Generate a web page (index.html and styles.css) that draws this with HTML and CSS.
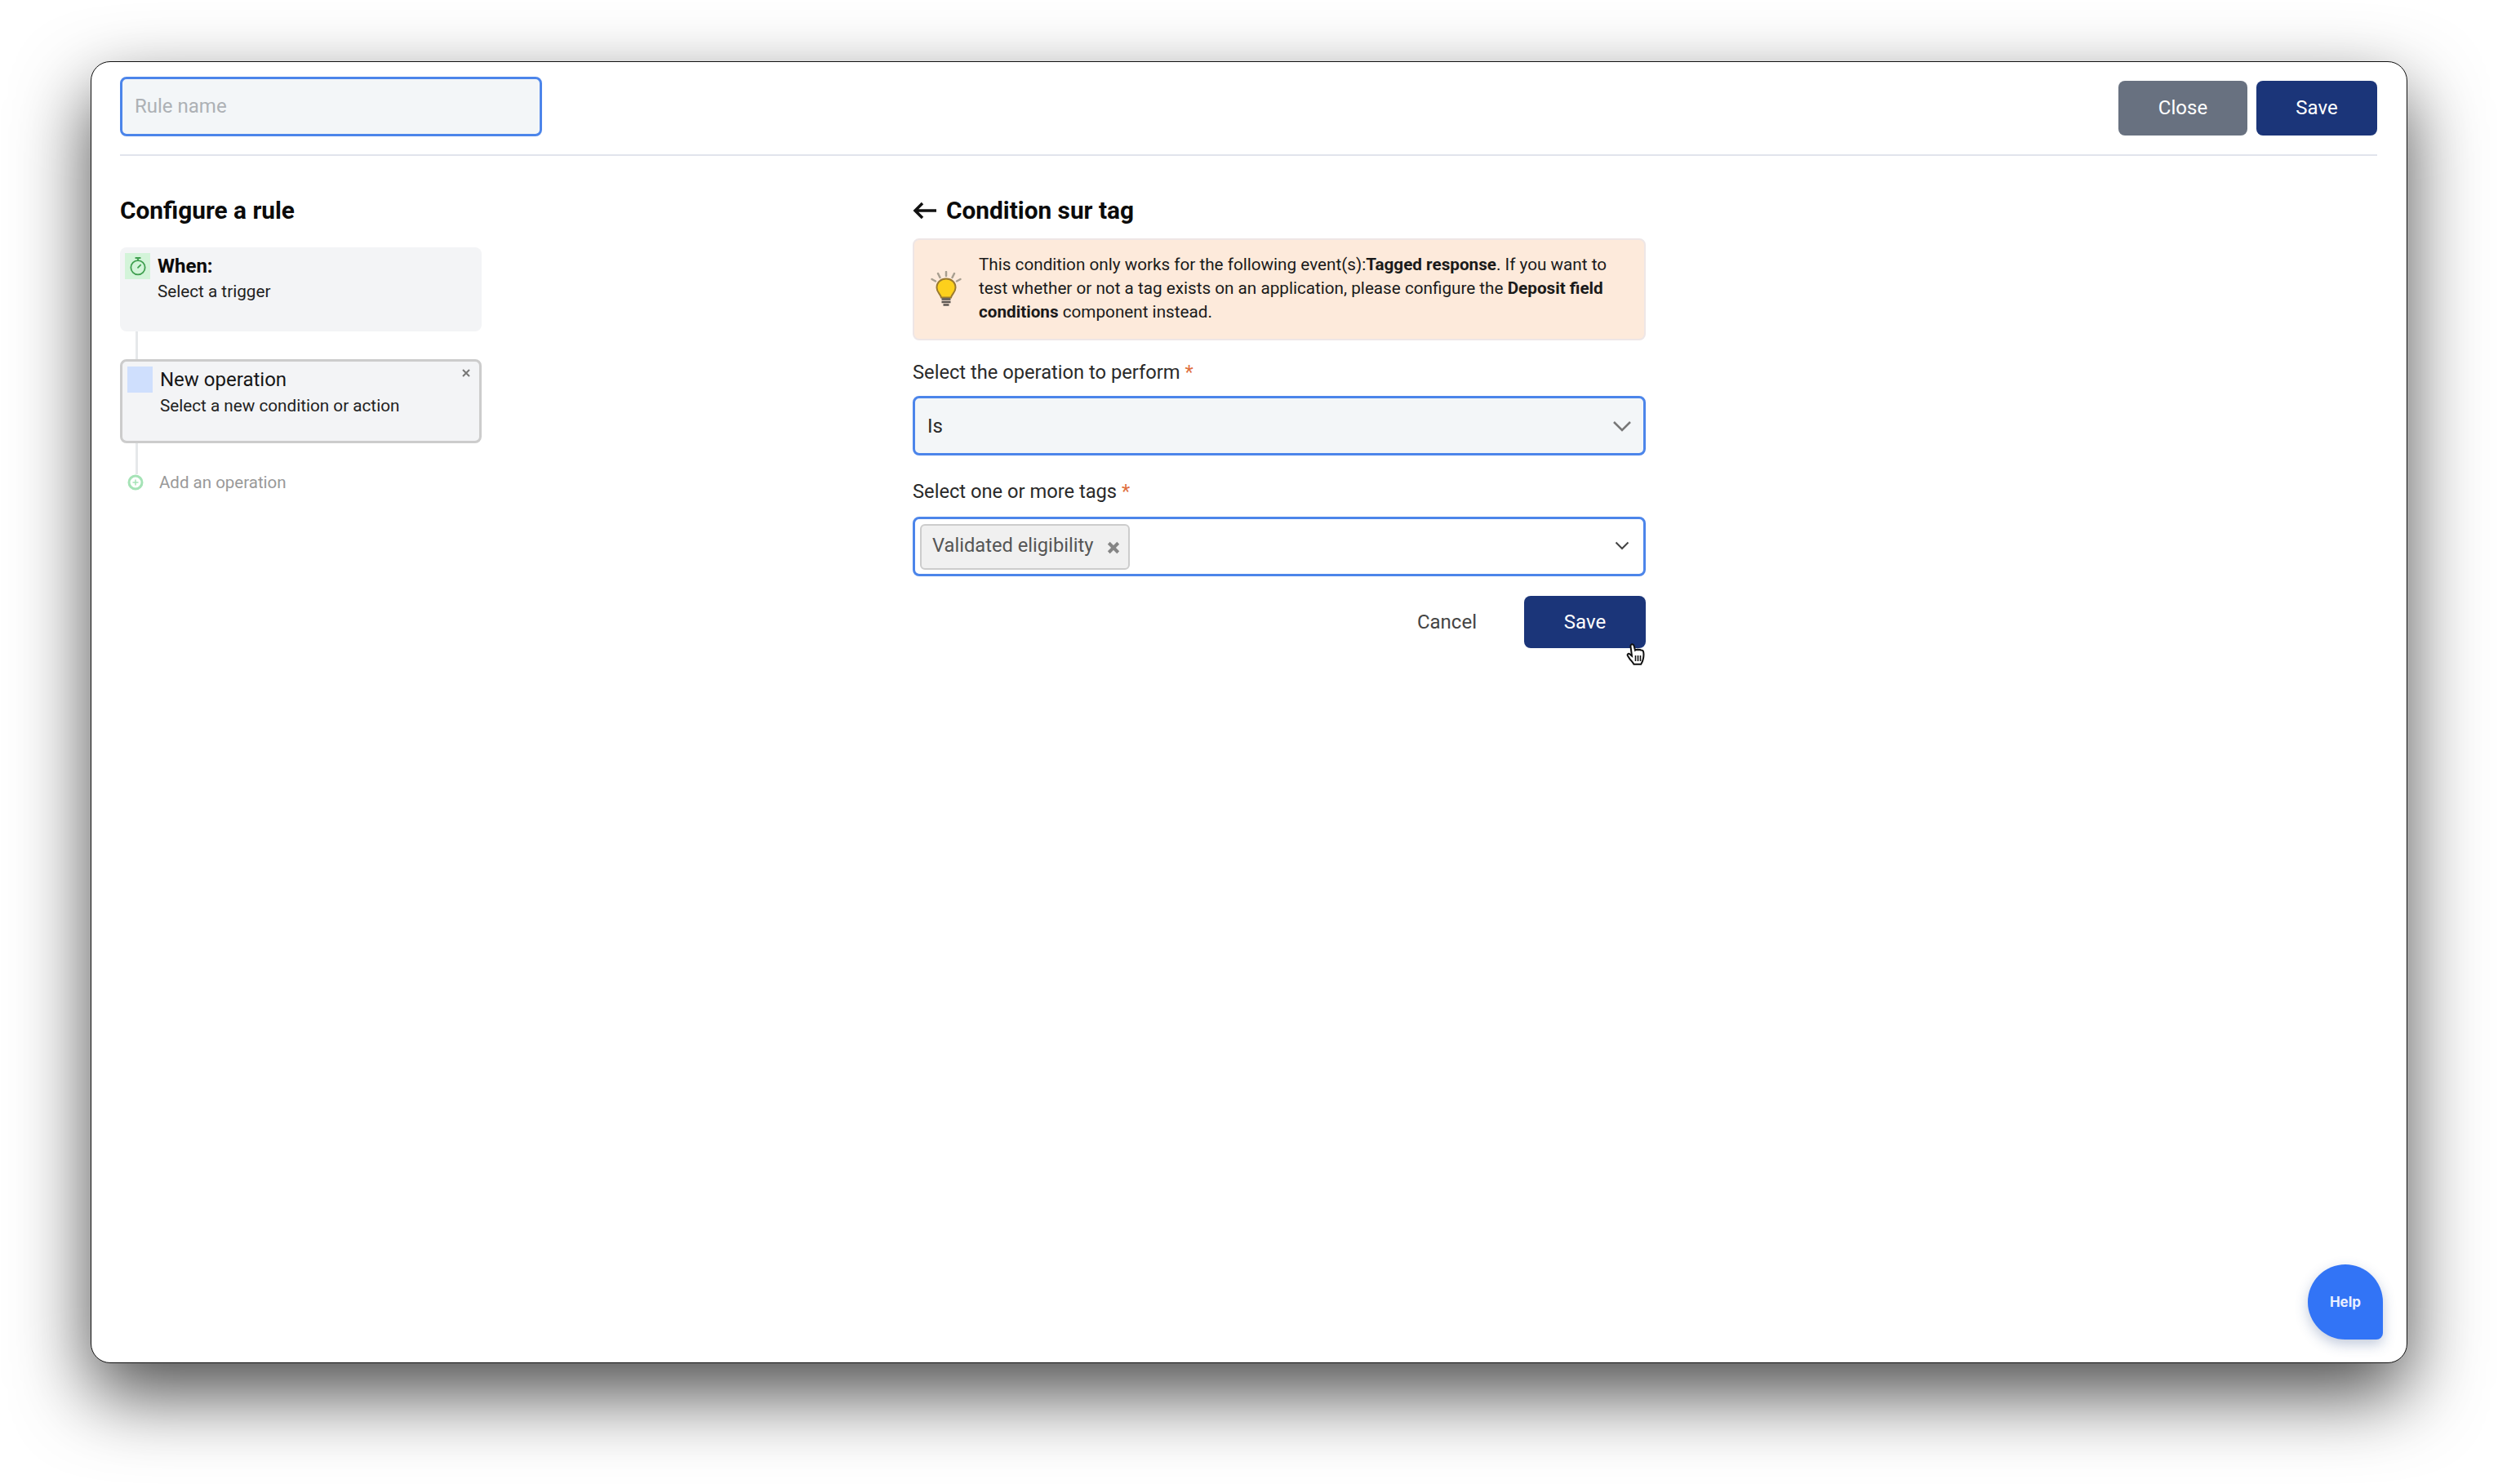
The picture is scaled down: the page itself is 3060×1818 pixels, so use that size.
FILE: index.html
```html
<!DOCTYPE html>
<html>
	<head>
		<title>Configure a rule</title>
		<link rel="stylesheet" href="styles.css">
	</head>
	<body>

		<div class="window">
			<div class="header">
				<div class="name-input">Rule name</div>
				<div class="header-actions">
					<button class="btn btn-grey">Close</button>
					<button class="btn btn-blue">Save</button>
				</div>
			</div>

			<div class="main">
				<div class="rule-col">
					<h2 class="heading">Configure a rule</h2>

					<div class="card">
						<div class="tile tile-green">
							<svg width="20" height="24" viewBox="0 0 22 26" fill="none" stroke="#3f9f4f" stroke-width="2" stroke-linecap="round">
								<circle cx="11" cy="15" r="9.5"/>
								<path d="M8 2h6M11 2v3.500M11 15l3.500-3.500"/>
							</svg>
						</div>
						<div>
							<div class="card-title bold">When:</div>
							<div class="card-sub">Select a trigger</div>
						</div>
					</div>

					<div class="connector"></div>

					<div class="card card-active">
						<div class="tile tile-blue"></div>
						<div>
							<div class="card-title">New operation</div>
							<div class="card-sub">Select a new condition or action</div>
						</div>
						<svg class="card-close" width="12" height="12" viewBox="0 0 12 12" stroke="#777" stroke-width="2">
							<path d="M2 2l8 8M10 2l-8 8"/>
						</svg>
					</div>

					<div class="connector connector-short"></div>

					<div class="add-row">
						<svg width="20" height="20" viewBox="0 0 20 20" fill="none" stroke="#a5e3b6" stroke-width="3">
							<circle cx="10" cy="10" r="8"/>
							<path d="M10 6.500v7M6.500 10h7" stroke-width="1.500"/>
						</svg>
						<span>Add an operation</span>
					</div>
				</div>

				<div class="form-col">
					<h2 class="heading heading-back">
						<svg width="30" height="22" viewBox="0 0 30 22" fill="none" stroke="#111" stroke-width="3.500">
							<path d="M29 11H3M12 2l-9 9 9 9"/>
						</svg>
						Condition sur tag
					</h2>

					<div class="alert">
						<svg class="bulb" width="38" height="44" viewBox="0 0 38 44" fill="none">
							<path d="M19 1v5M9 3l2.500 5M29 3l-2.500 5M1.500 10L6 12.500M36.500 10L32 12.500" stroke="#a89f90" stroke-width="2.500" stroke-linecap="round"/>
							<path d="M19 9.500c-6.500 0-11.500 4.500-11.500 11 0 5.500 4.500 7.500 5.500 12h12c1-4.500 5.500-6.500 5.500-12 0-6.500-5-11-11.500-11z" fill="#fdd01c" stroke="#9a7a30" stroke-width="2"/>
							<path d="M13.500 34.500h11M13.500 38h11M15.500 41.500h7" stroke="#5b5550" stroke-width="2.500"/>
						</svg>
						<p>This condition only works for the following event(s):<b>Tagged response</b>. If you want to test whether or not a tag exists on an application, please configure the <b>Deposit field conditions</b> component instead.</p>
					</div>

					<label class="field-label">Select the operation to perform <span class="req">*</span></label>
					<div class="select select-grey">
						<span class="select-value">Is</span>
						<svg width="24" height="14" viewBox="0 0 24 14" fill="none" stroke="#777" stroke-width="2.500">
							<path d="M2 2l10 10L22 2"/>
						</svg>
					</div>

					<label class="field-label field-label-next">Select one or more tags <span class="req">*</span></label>
					<div class="select select-tags">
						<div class="chip">
							<span>Validated eligibility</span>
							<svg width="16" height="16" viewBox="0 0 14 14" stroke="#858585" stroke-width="3.500">
								<path d="M2 2l10 10M12 2L2 12"/>
							</svg>
						</div>
						<svg class="chevron-small" width="18" height="11" viewBox="0 0 18 11" fill="none" stroke="#444" stroke-width="2">
							<path d="M1.500 1.500L9 9l7.500-7.500"/>
						</svg>
					</div>

					<div class="form-actions">
						<button class="btn-text">Cancel</button>
						<button class="btn btn-blue btn-form">Save</button>
						<svg class="cursor" width="24" height="27" viewBox="0 0 24 27">
							<path d="M6.500 1.500c1.300-.6 2.600.2 3 1.500l1.500 5.500c.5-.6 1.500-.8 2.300-.3.5-.5 1.600-.6 2.300 0 .7-.4 1.700-.3 2.300.3 1.500-.3 3 .6 3.300 2.300.5 3 .3 6-.5 9-.5 2.500-1.500 4.500-2.500 6H9.500c-1-2-3-4-5-6.500L2 15.500c-1-1.500.5-3.300 2-2.500l3 2.500L5.500 4c-.2-1 .2-2 1-2.500z" fill="#fff" stroke="#111" stroke-width="2"/>
							<path d="M11.500 15v7M14.500 15v7M17.500 15v7" stroke="#111" stroke-width="1.600"/>
						</svg>
					</div>
				</div>
			</div>

			<button class="help">Help</button>
		</div>

	</body>
</html>
```

FILE: styles.css
```css
* {
	box-sizing: border-box;
}
body {
	font-family: Roboto, Arial, sans-serif;
	width: 3060px;
	height: 1818px;
	padding: 75px 111px 0 111px;
	margin: 0;
	overflow: hidden;
	background-color: #fff;
	color: #111;
}

.window {
	position: relative;
	width: 2838px;
	height: 1595px;
	padding: 0 36px 0 35px;
	background-color: #fff;
	border: 1.5px solid #111;
	border-radius: 24px;
	box-shadow: 0 38px 92px rgba(0, 0, 0, .7);
}

.header {
	display: flex;
	justify-content: space-between;
	height: 115px;
	padding-top: 18px;
	border-bottom: 2px solid #e1e4ec;
}
.name-input {
	width: 517px;
	height: 73px;
	padding: 0 15px;
	font-size: 24px;
	line-height: 67px;
	color: #adb1b5;
	background-color: #f3f6f8;
	border: 3px solid #4c85ea;
	border-radius: 8px;
}
.header-actions {
	display: flex;
	gap: 11px;
	padding-top: 5px;
}

.btn {
	height: 67px;
	padding: 0 0 2px 0;
	border: 0;
	border-radius: 8px;
	font-family: inherit;
	font-size: 24px;
	color: #fff;
	cursor: pointer;
}
.btn-grey {
	width: 158px;
	background-color: #687180;
}
.btn-blue {
	width: 148px;
	background-color: #1b3579;
}

.main {
	display: flex;
	padding-top: 49px;
}
.rule-col {
	width: 971px;
}
.form-col {
	width: 898px;
}

.heading {
	margin: 0 0 27px 0;
	font-size: 29.800px;
	line-height: 36px;
	font-weight: 700;
	color: #0b0b0b;
}
.heading-back {
	display: flex;
	align-items: center;
	gap: 11px;
	margin-bottom: 16px;
}

.card {
	display: flex;
	align-items: flex-start;
	gap: 9px;
	width: 443px;
	height: 103px;
	padding: 7px 6px;
	background-color: #f3f4f6;
	border-radius: 8px;
}
.card-active {
	position: relative;
	height: 103px;
	padding: 6px;
	gap: 9px;
	border: 3px solid #ccc;
}
.card-close {
	position: absolute;
	top: 8px;
	right: 10px;
}
.tile {
	flex: none;
	display: flex;
	align-items: center;
	justify-content: center;
	width: 31px;
	height: 32px;
}
.tile-green {
	background-color: #d3f4d9;
}
.tile-blue {
	background-color: #cfdffd;
}
.card-title {
	margin-top: 1px;
	font-size: 24px;
	line-height: 30px;
	color: #161616;
}
.bold {
	font-weight: 700;
	color: #0b0b0b;
}
.card-sub {
	margin-top: 2px;
	font-size: 20.700px;
	line-height: 30px;
	color: #222;
}
.bold + .card-sub {
	margin-top: 1px;
}

.connector {
	width: 3px;
	height: 34px;
	margin-left: 19px;
	background-color: #e6e8ea;
}
.connector-short {
	height: 38px;
}
.add-row {
	display: flex;
	align-items: center;
	gap: 19px;
	margin: -2px 0 0 9px;
	font-size: 20.500px;
	line-height: 24px;
	color: #999;
}

.alert {
	display: flex;
	align-items: center;
	gap: 21px;
	height: 125px;
	padding: 0 20px;
	background-color: #fdeadb;
	border: 2px solid #eee6e6;
	border-radius: 8px;
}
.alert p {
	margin: -2px 0 0 0;
	font-size: 20.700px;
	line-height: 29px;
	color: #1a1a1a;
}
.bulb {
	flex: none;
	margin-top: -2px;
}

.field-label {
	display: block;
	margin: 24px 0 14px 0;
	font-size: 23.700px;
	line-height: 30px;
	color: #2a2a2a;
}
.field-label-next {
	margin: 29px 0 16px 0;
}
.req {
	color: #e0703f;
}

.select {
	display: flex;
	align-items: center;
	justify-content: space-between;
	height: 73px;
	padding: 0 14px 0 15px;
	border: 3px solid #4c85ea;
	border-radius: 8px;
}
.select-grey {
	background-color: #f3f6f8;
}
.select-value {
	font-size: 24px;
	color: #2a2a2a;
}
.select-tags {
	padding: 0 17px 0 6px;
	background-color: #fff;
}
.chevron-small {
	margin-top: -2px;
}
.chip {
	display: flex;
	align-items: center;
	justify-content: space-between;
	width: 257px;
	height: 56px;
	padding: 0 10px 0 13px;
	font-size: 23.700px;
	white-space: nowrap;
	color: #555;
	background-color: #f0f0f0;
	border: 2px solid #ccc;
	border-radius: 6px;
}
.chip span {
	margin-top: -3px;
}
.chip svg {
	flex: none;
	margin-top: 3px;
}

.form-actions {
	position: relative;
	display: flex;
	justify-content: flex-end;
	align-items: center;
	gap: 58px;
	margin-top: 24px;
}
.btn-text {
	padding: 0;
	border: 0;
	background: none;
	font-family: inherit;
	font-size: 24px;
	color: #444;
}
.btn-form {
	width: 149px;
	height: 64px;
	padding: 0;
}
.cursor {
	position: absolute;
	top: 58px;
	right: 0;
}

.help {
	position: absolute;
	right: 29px;
	bottom: 28px;
	width: 92px;
	height: 92px;
	padding: 0;
	border: 0;
	border-radius: 46px 46px 8px 46px;
	font-family: Inter, Roboto, sans-serif;
	font-size: 17px;
	font-weight: 700;
	color: #eaf0ff;
	background-color: #3274f6;
	box-shadow: 0 6px 16px rgba(50, 80, 140, .3);
}
```
